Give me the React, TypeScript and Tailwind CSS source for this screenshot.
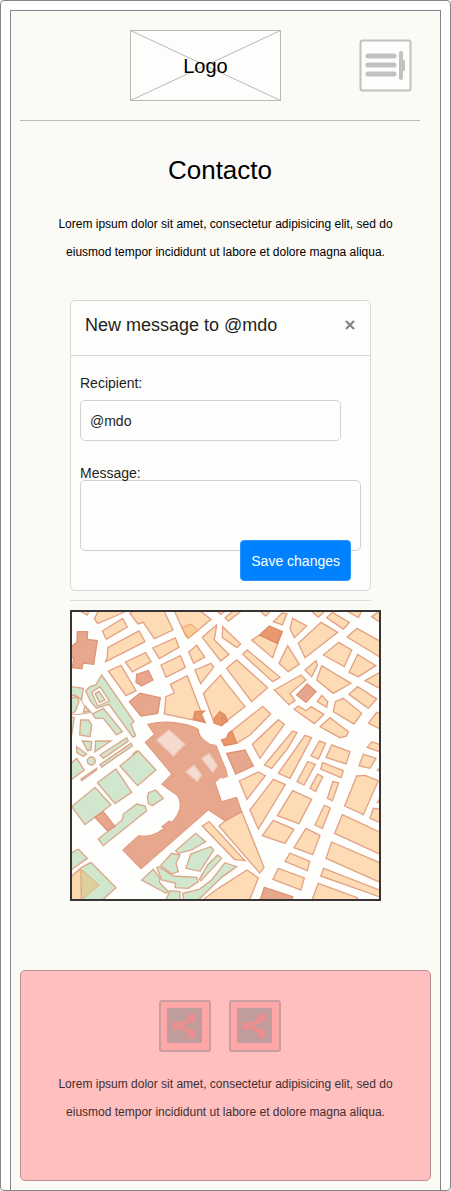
import React from "react";

type Offset = [number, number];
type BlockGroup = { offset: Offset; blocks: string[] };

const NW: Offset = [0, 0];
const NE: Offset = [480, 0];
const SW: Offset = [0, 435];
const SE: Offset = [480, 435];

const parks: BlockGroup[] = [
  {
    offset: NW,
    blocks: [
      "110,210 207,350 198,358 212,392 204,397 132,298 94,310 76,288 62,258 75,245 92,240",
      "82,327 115,310 172,380 155,390 115,340 92,340",
      "18,245 55,250 50,284 30,270 18,272",
      "18,280 35,276 42,290 30,320 18,325",
      "55,322 60,303 75,318",
      "18,335 28,338 20,390",
      "47,345 70,345 80,360 75,395 44,390",
      "52,408 80,410 78,435 68,437",
      "92,408 138,408 90,440",
      "35,425 65,447 55,454 35,442",
      "105,450 185,398 190,408 115,460",
      "204,447 215,438 225,448 214,456",
    ],
  },
  {
    offset: SW,
    blocks: [
      "105,44 198,-20 202,-12 110,51",
      "48,87 95,55 95,60 50,92",
      "18,40 35,25 58,60 18,90",
      "165,48 220,3 273,60 218,107",
      "97,98 153,57 200,127 150,161",
      "20,170 90,112 138,165 60,224",
      "247,140 251,128 272,120 295,145 262,167 250,160",
      "100,267 172,210 175,192 215,162 240,168 245,182 115,287",
      "18,310 40,297 67,325 18,360",
      "50,352 78,337 153,413 112,450 18,450 18,380",
      "332,302 392,250 422,275 380,300 340,310",
      "363,355 377,312 437,290 446,300 405,364",
      "403,388 428,345 458,315 470,325 408,392",
      "287,347 320,310 345,315 333,340 340,365 320,372",
      "275,352 282,350 325,378 395,382 400,395 370,415 330,413 332,400 290,390",
      "230,390 265,358 285,385 283,397 310,425 303,430",
      "303,450 315,422 345,425 345,450",
      "400,450 355,450 353,430 403,418 440,390 480,338 515,350 470,382",
    ],
  },
];

const housing: BlockGroup[] = [
  {
    offset: NW,
    blocks: [
      "44,18 72,18 67,30",
      "100,18 185,18 152,33 98,55 88,42",
      "112,78 173,40 187,66 124,103",
      "128,128 222,78 240,110 122,170 127,155",
      "195,25 205,18 297,18 324,75 268,101 235,52 219,57",
      "328,18 405,18 438,43 400,75 370,100 362,92",
      "263,129 331,99 342,127 283,161",
      "181,171 242,143 258,170 202,201",
      "130,198 168,181 213,257 183,272",
      "288,180 346,152 361,187 303,217",
      "371,141 395,121 419,156 386,175",
      "390,195 438,175 446,187 407,236",
      "316,238 367,212 420,352 298,327 303,275 328,264",
      "412,97 455,60 448,105 492,148 467,168",
      "473,65 527,117 516,128 472,98",
      "455,18 480,18 467,28",
      "480,38 505,18 526,20 490,48",
      "415,265 467,210 480,230 540,305 484,348 447,352",
    ],
  },
  {
    offset: NE,
    blocks: [
      "105,18 137,18 122,33",
      "145,50 172,24 186,26 172,60",
      "203,40 245,63 208,98 195,70",
      "258,18 300,18 280,36",
      "305,38 322,22 373,52 355,72",
      "365,18 410,18 400,38",
      "440,35 465,18 465,52",
      "220,115 288,52 338,82 240,158",
      "366,96 396,70 468,110 468,158",
      "295,150 341,112 380,135 358,185",
      "372,202 398,148 453,182 400,215",
      "162,175 188,122 223,178 190,200",
      "80,105 104,90 158,115 143,158",
      "53,148 67,135 165,217 143,230",
      "240,195 273,167 277,182 260,215",
      "275,225 290,182 378,235 325,265",
      "420,227 468,200 468,252",
      "5,190 35,165 128,248 80,290",
      "148,255 228,210 243,225 195,265 210,287 192,299",
      "277,290 290,271 308,290 305,307",
      "207,313 220,303 243,317 258,305 297,328 268,356",
      "331,290 355,280 410,325 387,357 325,320",
      "372,268 398,245 455,282 430,310",
      "285,365 315,338 370,380 365,393 345,398",
      "430,355 455,322 468,325 468,373",
      "20,378 113,304 137,327 75,390 35,415",
      "82,418 160,344 178,358 105,460",
      "203,378 216,383 188,430 140,490 118,480",
      "240,391 260,398 195,520 160,505",
      "283,408 302,415 280,462 258,452",
      "320,420 375,440 363,477 303,457",
      "427,427 440,410 468,420 468,442",
    ],
  },
  {
    offset: SE,
    blocks: [
      "248,35 271,43 237,105 216,95",
      "293,38 355,62 348,83 287,57",
      "278,72 293,80 272,124 255,115",
      "324,94 341,99 322,152 307,145",
      "402,47 415,13 453,25 435,55",
      "395,78 420,76 460,92 415,194 359,168",
      "435,205 445,175 468,178 468,218",
      "457,60 468,50 468,65",
      "457,157 468,140 468,160",
      "43,93 100,66 121,77 66,148",
      "75,180 145,88 181,104 100,237",
      "203,122 260,148 222,221 157,197",
      "298,166 316,174 292,235 270,225",
      "112,257 145,211 207,238 180,280",
      "243,235 285,256 263,314 207,293",
      "195,309 254,334 247,362 180,334",
      "160,355 238,384 228,420 144,388",
      "352,194 468,248 468,314 329,250",
      "320,276 468,340 468,398 303,325",
      "296,355 468,422 468,442 287,378",
      "280,400 397,443 397,452 260,452",
      "-18,228 0,213 50,185 117,352 104,369",
      "-68,228 -48,215 60,332 28,328",
      "-70,452 -20,415 66,360 100,384 73,452",
    ],
  },
];

const civic: BlockGroup[] = [
  {
    offset: NW,
    blocks: [
      "37,80 68,80 66,103 97,107 86,178 54,174 51,191 22,188 26,160 18,158 18,125 36,112",
      "215,208 250,197 264,225 230,243 213,232",
      "193,290 225,265 286,278 278,325 228,333",
    ],
  },
  { offset: NE, blocks: ["215,270 247,237 273,260 243,292", "5,445 60,435 85,483 32,507"] },
  { offset: SW, blocks: ["90,202 115,185 150,230 128,243"] },
  { offset: SE, blocks: ["118,412 203,440 200,452 105,452"] },
];

const landmarks: BlockGroup[] = [
  { offset: NW, blocks: ["385,342 390,320 418,318 405,330 420,352", "447,340 465,320 480,330 487,347 470,362 448,355"] },
  { offset: NE, blocks: ["104,90 133,63 172,80 158,115", "-8,335 8,348 -8,358", "-10,405 5,400 10,385 20,378 35,415 -2,422"] },
];

const courtyards: BlockGroup[] = [
  { offset: NW, blocks: ["275,405 312,375 360,418 325,453"] },
  { offset: SW, blocks: ["410,25 433,10 457,48 443,67", "363,65 387,45 410,75 397,95"] },
];

function Blocks({ groups, fill, stroke }: { groups: BlockGroup[]; fill: string; stroke: string }) {
  return (
    <g fill={fill} stroke={stroke} strokeWidth={4}>
      {groups.map((group, i) => (
        <g key={i} transform={`translate(${group.offset[0]} ${group.offset[1]})`}>
          {group.blocks.map((points) => (
            <polygon key={points} points={points} />
          ))}
        </g>
      ))}
    </g>
  );
}

function CityMap() {
  return (
    <svg viewBox="15 15 933 873" className="block h-auto w-full" role="img" aria-label="Mapa">
      <rect x="15" y="15" width="933" height="873" fill="#fefefc" />
      <Blocks groups={parks} fill="#d0e6cd" stroke="#dba78b" />
      <polygon points="80,262 105,245 133,288 98,303" fill="#fefefc" stroke="#dba78b" strokeWidth="4" />
      <polygon points="90,266 102,259 120,285 104,292" fill="#d0e6cd" stroke="#dba78b" strokeWidth="4" />
      <circle cx="79" cy="468" r="12" fill="#d0e6cd" stroke="#dba78b" strokeWidth="4" />
      <path d="M18 272Q45 272 60 305L85 330M18 328L45 328L80 322" fill="none" stroke="#dba78b" strokeWidth="3" />
      <polygon points="18,815 48,792 48,885 18,885" fill="#fbd7ae" stroke="#dfab82" strokeWidth="3" />
      <polygon points="48,792 102,840 50,885" fill="#dfcf9f" stroke="#dfb080" strokeWidth="3" />
      <Blocks groups={housing} fill="#fddbb5" stroke="#e3a285" />
      <polygon points="350,68 378,57 398,75 370,100" fill="#fbcd96" stroke="#ea9f6c" strokeWidth="3" />
      <path
        d="M248 358Q300 345 350 356Q385 362 400 373Q400 392 420 408Q438 423 453 421L485 500L450 532L470 590L515 577L530 620L480 648L430 615L228 792L173 735L220 692Q260 700 297 670L290 665L313 647L320 652Q340 632 345 610Q348 585 335 570L290 538L320 507L240 412L268 388Z"
        fill="#e6a78d"
        stroke="#df9478"
        strokeWidth="3"
      />
      <polygon points="470,405 482,403 482,418" fill="#e6966c" />
      <polygon points="465,480 482,485 490,515 470,522" fill="#e6a78d" />
      <Blocks groups={civic} fill="#e6a78d" stroke="#df9478" />
      <Blocks groups={landmarks} fill="#ea976c" stroke="#df8a63" />
      <Blocks groups={courtyards} fill="#f4dacf" stroke="#efc6b5" />
      <rect x="18" y="18" width="927" height="867" fill="none" stroke="#373435" strokeWidth="6" />
    </svg>
  );
}

function ShareButton({ label }: { label: string }) {
  return (
    <button type="button" aria-label={label} className="size-[52px]">
      <svg viewBox="0 0 52 52" className="block size-full">
        <rect x="1" y="1" width="50" height="50" rx="2" fill="#ffa6a6" stroke="#cb9f9f" strokeWidth="2" />
        <rect x="8" y="8" width="35" height="35" rx="1" fill="#c19c9c" />
        <g fill="#e98f8f" stroke="#e98f8f">
          <path d="M33 18Q29 23 17 26Q29 28 33 34" fill="none" strokeWidth="4" />
          <circle cx="17" cy="26" r="4" />
          <circle cx="33" cy="18" r="4" />
          <circle cx="33" cy="34" r="4" />
        </g>
      </svg>
    </button>
  );
}

function Lorem() {
  return (
    <p className="mx-auto max-w-[350px] text-center text-xs leading-7">
      Lorem ipsum dolor sit amet, consectetur adipisicing elit, sed do eiusmod tempor incididunt ut labore et dolore
      magna aliqua.
    </p>
  );
}

export default function App() {
  return (
    <div className="rounded border border-[#858585] bg-white px-[9px] pt-[9px] font-['Liberation_Sans',Arial,sans-serif] text-black">
      <div className="border border-b-0 border-[#858585] bg-[#fbfaf5] px-[9px] pb-[9px]">
        <header className="mr-[11px] flex items-start justify-between border-b border-[#bdbdb9] pt-[19px] pr-2 pb-[19px] pl-[110px]">
          <a href="#inicio" className="relative flex h-[71px] w-[151px] items-center justify-center text-xl">
            <svg viewBox="0 0 151 71" className="absolute inset-0 size-full" aria-hidden="true">
              <rect x="0.500" y="0.500" width="150" height="70" fill="#fdfdfb" stroke="#b8b8b8" />
              <path d="M0.500 0.500L150.500 70.500M0.500 70.500L150.500 0.500" stroke="#b8b8b8" />
            </svg>
            <span className="relative">Logo</span>
          </a>
          <button type="button" aria-label="Menú" className="mt-[9px] size-[53px]">
            <svg viewBox="0 0 53 53" className="block size-full">
              <rect x="1.500" y="1.500" width="50" height="50" rx="2" fill="#fdfdfb" stroke="#c1c1bf" strokeWidth="2" />
              <path d="M9 17H35M9 26H35M9 35H35" stroke="#c1c1bf" strokeWidth="5" strokeLinecap="round" />
              <path d="M42 14V39" stroke="#c1c1bf" strokeWidth="4" strokeLinecap="round" />
              <rect x="42" y="21" width="4" height="11" rx="1" fill="#c1c1bf" />
            </svg>
          </button>
        </header>

        <main>
          <h1 className="mt-[31px] mr-[11px] text-center text-[26px] leading-9">
            <span className="inline-block bg-[#fafaf9] px-[2px]">Contacto</span>
          </h1>
          <div className="mt-[22px]">
            <Lorem />
          </div>

          <div className="px-[50px]">
            <form className="mt-[34px] mr-[10px] rounded-[5px] border border-[#d6d7d8] bg-[#fdfdfb]">
              <div className="flex h-[55px] items-center justify-between border-b border-[#d6d7d8] px-[14px] pb-[6px]">
                <h2 className="text-lg text-[#1d1f21]">New message to @mdo</h2>
                <button type="button" aria-label="Close" className="flex size-3 items-center justify-center">
                  <svg viewBox="0 0 12 12" className="size-3">
                    <path d="M2 2L10 10M10 2L2 10" stroke="#7f7f7f" strokeWidth="2" />
                  </svg>
                </button>
              </div>
              <div className="px-[9px] pt-[17px] pb-[9px] text-sm text-[#1d1f21]">
                <label htmlFor="recipient" className="block">
                  Recipient:
                </label>
                <div className="mt-[7px] pr-5">
                  <input
                    id="recipient"
                    type="text"
                    defaultValue="@mdo"
                    className="block h-[41px] w-full rounded-[5px] border border-[#ced2d5] bg-[#fefefd] px-[9px]"
                  />
                </div>
                <label htmlFor="message" className="mt-[22px] block h-[17px]">
                  Message:
                </label>
                <textarea
                  id="message"
                  className="block h-[71px] w-full resize-none rounded-[5px] border border-[#ced2d5] bg-[#fefefd] p-2"
                />
                <div className="relative -mt-[11px] flex justify-end pr-[10px]">
                  <button
                    type="submit"
                    className="h-[41px] rounded border border-[#2a95ff] bg-[#0082ff] px-[10px] text-white"
                  >
                    Save changes
                  </button>
                </div>
              </div>
            </form>

            <hr className="mt-[9px] mr-[10px] border-[#dcdcd9]" />
            <div className="mt-[9px]">
              <CityMap />
            </div>
          </div>
        </main>

        <footer className="mt-[69px] h-[211px] rounded-[5px] border border-[#bd8f96] bg-[#ffbfbf] pt-[29px] text-[#403030]">
          <div className="mr-[11px] flex justify-center gap-[18px]">
            <ShareButton label="Compartir" />
            <ShareButton label="Compartir enlace" />
          </div>
          <div className="mt-[18px]">
            <Lorem />
          </div>
        </footer>
      </div>
    </div>
  );
}
